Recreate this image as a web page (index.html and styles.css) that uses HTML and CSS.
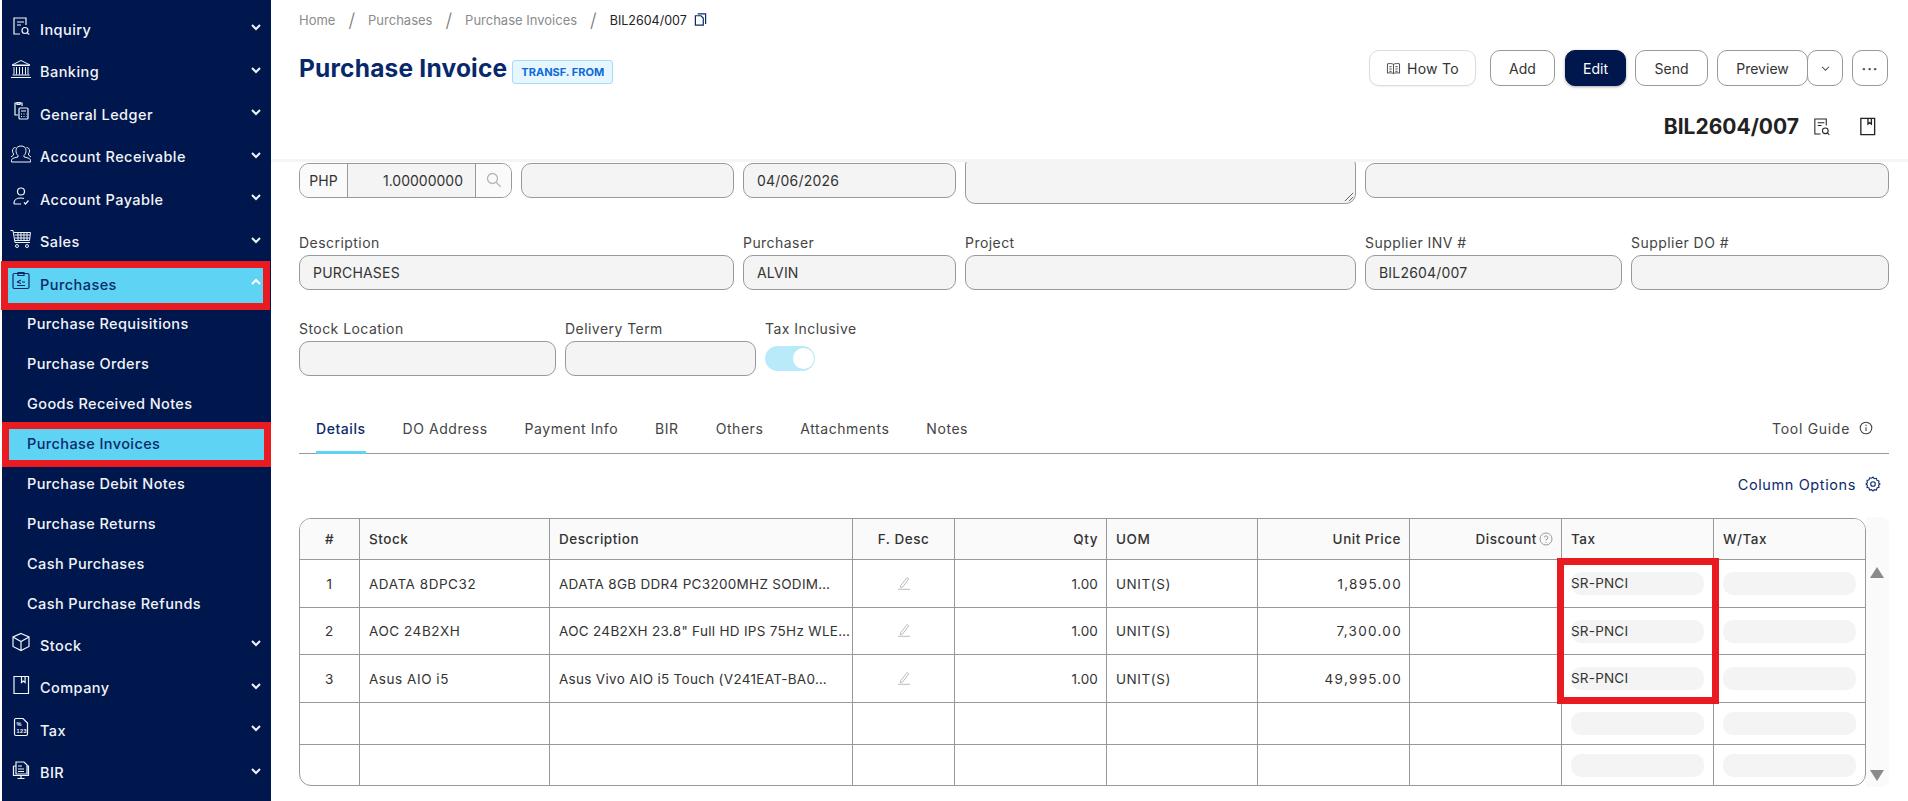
FILE: index.html
```html
<!DOCTYPE html>
<html lang="en">
<head>
<meta charset="utf-8">
<title>Purchase Invoice</title>
<link rel="stylesheet" href="styles.css">
</head>
<body>
<div class="app">
  <nav class="side">
    <a class="mi"><svg class="ic" viewBox="0 0 20 20"><path d="M15 9V2H3v16h6M6 6h7M6 9h4"/><circle cx="14" cy="14.500" r="3"/><path d="M16.200 16.700l2 2"/></svg><span>Inquiry</span><svg class="cv" viewBox="0 0 12 8"><path d="M2 2l4 4 4-4"/></svg></a>
    <a class="mi"><svg class="ic ic-w" viewBox="0 0 22 20"><path d="M2 6L11 1.500 20 6zM2.500 6.500h17M4 8v7.500M6.500 8v7.500M9.500 8v7.500M12.500 8v7.500M15.500 8v7.500M18 8v7.500M2.500 16h17M1 18.500h20"/></svg><span>Banking</span><svg class="cv" viewBox="0 0 12 8"><path d="M2 2l4 4 4-4"/></svg></a>
    <a class="mi"><svg class="ic" viewBox="0 0 20 20"><path d="M11 5V2H4v12h3M6 1.500h3v2H6z"/><rect x="8" y="7" width="9" height="11" rx="1"/><path d="M10 10h5M10 13h1M12.500 13h1M15 13h.5M10 15.500h1M12.500 15.500h1M15 15.500h.5"/></svg><span>General Ledger</span><svg class="cv" viewBox="0 0 12 8"><path d="M2 2l4 4 4-4"/></svg></a>
    <a class="mi"><svg class="ic ic-w" viewBox="0 0 22 20"><path d="M8 13c-2 .5-6.500 1-6.500 3.500V18h19v-1.500C20.500 14 16 13.500 14 13v-1.500c1.500-1.500 2-3 2-5C16 3.500 14 2 11 2S6 3.500 6 6.500c0 2 .5 3.500 2 5zM5.500 3.500C3.500 3.500 2.500 5 2.500 7c0 1 .5 2 1 3v1l-2.500 2M16.500 3.500c2 0 3 1.500 3 3.500 0 1-.5 2-1 3v1l2.500 2"/></svg><span>Account Receivable</span><svg class="cv" viewBox="0 0 12 8"><path d="M2 2l4 4 4-4"/></svg></a>
    <a class="mi"><svg class="ic" viewBox="0 0 20 20"><circle cx="10" cy="5.500" r="3.500"/><path d="M3 18v-1c0-3 3-5 7-5 1 0 2 .2 3 .5M3 18h7M13 16.500l1.500 1.500 3-3.500"/></svg><span>Account Payable</span><svg class="cv" viewBox="0 0 12 8"><path d="M2 2l4 4 4-4"/></svg></a>
    <a class="mi"><svg class="ic ic-w" viewBox="0 0 22 20"><path d="M.5 1.500H3l2 12h15M4 3.500h16.500l-1 8H5M8 3.500v8M11 3.500v8M14 3.500v8M17 3.500v8M4.500 6h15.500M4.800 9h15"/><circle cx="7" cy="17" r="1.500"/><circle cx="17" cy="17" r="1.500"/></svg><span>Sales</span><svg class="cv" viewBox="0 0 12 8"><path d="M2 2l4 4 4-4"/></svg></a>
    <a class="mi active"><svg class="ic" viewBox="0 0 20 20"><rect x="2" y="2.500" width="16" height="15" rx="1.500"/><path d="M7 1.500h6v3H7zM6 11l4-2M6 11l4 1.500M6 14.500h8M11 11h3"/></svg><span>Purchases</span><svg class="cv" viewBox="0 0 12 8"><path d="M2 6l4-4 4 4"/></svg></a>
    <div class="subs">
      <a class="si">Purchase Requisitions</a>
      <a class="si">Purchase Orders</a>
      <a class="si">Goods Received Notes</a>
      <a class="si active">Purchase Invoices</a>
      <a class="si">Purchase Debit Notes</a>
      <a class="si">Purchase Returns</a>
      <a class="si">Cash Purchases</a>
      <a class="si">Cash Purchase Refunds</a>
    </div>
    <a class="mi"><svg class="ic" viewBox="0 0 20 20"><path d="M10 1.500l8 3.500v9.500l-8 4-8-4V5zM2 5l8 4.500L18 5M10 9.500V18.500"/></svg><span>Stock</span><svg class="cv" viewBox="0 0 12 8"><path d="M2 2l4 4 4-4"/></svg></a>
    <a class="mi"><svg class="ic" viewBox="0 0 20 20"><path d="M3 1.500h14.500v17H3zM10.500 1.500v6l1.800-1.500 1.800 1.500v-6"/></svg><span>Company</span><svg class="cv" viewBox="0 0 12 8"><path d="M2 2l4 4 4-4"/></svg></a>
    <a class="mi"><svg class="ic" viewBox="0 0 20 20"><path d="M3.500 3a1.500 1.500 0 0 1 1.500-1.500h7l4.500 4.500V17a1.500 1.500 0 0 1-1.500 1.500H5A1.500 1.500 0 0 1 3.500 17z"/><text class="ic-t" x="5.500" y="8.500">%</text><text class="ic-t" x="5.500" y="16">123</text></svg><span>Tax</span><svg class="cv" viewBox="0 0 12 8"><path d="M2 2l4 4 4-4"/></svg></a>
    <a class="mi"><svg class="ic" viewBox="0 0 20 20"><path d="M5 2h8l3 3v9H5zM2.500 6H5M16 6h1.500v9.500h-15V6M7 6h4M7 9h6M7 11.500h6M10 15.500V18M6.500 18.500h7"/></svg><span>BIR</span><svg class="cv" viewBox="0 0 12 8"><path d="M2 2l4 4 4-4"/></svg></a>
  </nav>

  <main class="main">
    <header class="head">
      <div class="crumbs">
        <span>Home</span><i>/</i><span>Purchases</span><i>/</i><span>Purchase Invoices</span><i>/</i>
        <b>BIL2604/007</b>
        <svg class="copy" viewBox="0 0 14 16"><path d="M4 2.500h8.500v11M1.500 4.500h6l2.500 2.500v7.500H1.500z"/></svg>
      </div>
      <div class="titlebar">
        <div class="title"><h1>Purchase Invoice</h1><span class="badge">TRANSF. FROM</span></div>
        <div class="actions">
          <button class="btn howto"><svg viewBox="0 0 16 14"><path d="M8 2.500C6.500 1.500 3.500 1.500 1.500 2v10c2-.5 5-.5 6.500.5 1.500-1 4.500-1 6.500-.5V2c-2-.5-5-.5-6.500.5zM8 2.500v10M3.500 5h2.500M3.500 7.500h2.500M3.500 10h2.500M10 5h2.500M10 7.500h2.500M10 10h2.500"/></svg>How To</button>
          <button class="btn add">Add</button>
          <button class="btn edit">Edit</button>
          <button class="btn send">Send</button>
          <div class="split">
            <button class="btn preview">Preview</button>
            <button class="btn caret"><svg viewBox="0 0 12 8"><path d="M2 2l4 4 4-4"/></svg></button>
          </div>
          <button class="btn more">&#183;&#183;&#183;</button>
        </div>
      </div>
      <div class="docline">
        <strong>BIL2604/007</strong>
        <svg class="doc-ic" viewBox="0 0 20 20"><path d="M15 9V2H3v16h6M6 6h7M6 9h4"/><circle cx="14" cy="14.500" r="3"/><path d="M16.200 16.700l2 2"/></svg>
        <svg class="doc-ic" viewBox="0 0 20 20"><path d="M3 1.500h14.500v17H3zM10.500 1.500v6l1.800-1.500 1.800 1.500v-6"/></svg>
      </div>
    </header>

    <section class="body">
      <div class="row r1">
        <div class="group">
          <span class="g-code">PHP</span>
          <span class="g-rate">1.00000000</span>
          <span class="g-search"><svg viewBox="0 0 16 16"><circle cx="6.500" cy="6.500" r="5"/><path d="M10.200 10.200l4.500 4.500"/></svg></span>
        </div>
        <div class="input"></div>
        <div class="input">04/06/2026</div>
        <div class="input area"><svg class="grip" viewBox="0 0 12 12"><path d="M1 11L11 1M6 11l5-5"/></svg></div>
        <div class="input"></div>
      </div>
      <div class="row r2">
        <label class="field"><span>Description</span><div class="input">PURCHASES</div></label>
        <label class="field"><span>Purchaser</span><div class="input">ALVIN</div></label>
        <label class="field"><span>Project</span><div class="input"></div></label>
        <label class="field"><span>Supplier INV #</span><div class="input">BIL2604/007</div></label>
        <label class="field"><span>Supplier DO #</span><div class="input"></div></label>
      </div>
      <div class="row r3">
        <label class="field"><span>Stock Location</span><div class="input"></div></label>
        <label class="field"><span>Delivery Term</span><div class="input"></div></label>
        <label class="field"><span>Tax Inclusive</span><div class="toggle"><i></i></div></label>
      </div>

      <div class="tabs">
        <a class="tab on">Details</a>
        <a class="tab">DO Address</a>
        <a class="tab">Payment Info</a>
        <a class="tab">BIR</a>
        <a class="tab">Others</a>
        <a class="tab">Attachments</a>
        <a class="tab">Notes</a>
        <a class="guide">Tool Guide<svg viewBox="0 0 14 14"><circle cx="7" cy="7" r="5.800"/><path d="M7 6.300v3.800M7 3.800v1.200"/></svg></a>
      </div>

      <div class="colopts">Column Options<svg viewBox="0 0 16 16"><path d="M8 1l1.300 1.700 2.100-.4.6 2 2 .7-.4 2.100L15 8l-1.400 1.300.4 2-2 .7-.6 2-2.100-.4L8 15l-1.300-1.400-2.100.4-.6-2-2-.7.4-2L1 8l1.400-1.400-.4-2.100 2-.7.6-2 2.100.4z"/><circle cx="8" cy="8" r="2.300"/></svg></div>

      <div class="gridwrap">
        <div class="tablebox">
          <table class="grid">
            <colgroup>
              <col class="c-no"><col class="c-stock"><col class="c-desc"><col class="c-f"><col class="c-q"><col class="c-u"><col class="c-m"><col class="c-m"><col class="c-m"><col class="c-l">
            </colgroup>
            <thead>
              <tr><th class="ctr">#</th><th>Stock</th><th>Description</th><th class="ctr">F. Desc</th><th class="rt">Qty</th><th>UOM</th><th class="rt">Unit Price</th><th class="rt">Discount<svg class="help" viewBox="0 0 14 14"><circle cx="7" cy="7" r="6"/><path d="M5.200 5.500A1.800 1.800 0 1 1 7 7.500V8.500M7 10v1"/></svg></th><th>Tax</th><th>W/Tax</th></tr>
            </thead>
            <tbody>
              <tr class="h48">
                <td class="ctr">1</td><td>ADATA 8DPC32</td><td class="nw">ADATA 8GB DDR4 PC3200MHZ SODIM…</td>
                <td class="ctr"><svg class="pen" viewBox="0 0 14 14"><path d="M3.500 10L10 1.500l1.800 1.400-6.300 8.200-2.200.6zM1 13.300h12"/></svg></td>
                <td class="rt qty">1.00</td><td>UNIT(S)</td><td class="rt price">1,895.00</td><td></td>
                <td><div class="pill">SR-PNCI</div></td><td><div class="pill"></div></td>
              </tr>
              <tr class="h47">
                <td class="ctr">2</td><td>AOC 24B2XH</td><td class="nw">AOC 24B2XH 23.8" Full HD IPS 75Hz WLE…</td>
                <td class="ctr"><svg class="pen" viewBox="0 0 14 14"><path d="M3.500 10L10 1.500l1.800 1.400-6.300 8.200-2.200.6zM1 13.300h12"/></svg></td>
                <td class="rt qty">1.00</td><td>UNIT(S)</td><td class="rt price">7,300.00</td><td></td>
                <td><div class="pill">SR-PNCI</div></td><td><div class="pill"></div></td>
              </tr>
              <tr class="h48">
                <td class="ctr">3</td><td>Asus AIO i5</td><td class="nw">Asus Vivo AIO i5 Touch (V241EAT-BA0…</td>
                <td class="ctr"><svg class="pen" viewBox="0 0 14 14"><path d="M3.500 10L10 1.500l1.800 1.400-6.300 8.200-2.200.6zM1 13.300h12"/></svg></td>
                <td class="rt qty">1.00</td><td>UNIT(S)</td><td class="rt price">49,995.00</td><td></td>
                <td><div class="pill">SR-PNCI</div></td><td><div class="pill"></div></td>
              </tr>
              <tr class="h42"><td></td><td></td><td></td><td></td><td></td><td></td><td></td><td></td><td><div class="pill"></div></td><td><div class="pill"></div></td></tr>
              <tr class="h41"><td></td><td></td><td></td><td></td><td></td><td></td><td></td><td></td><td><div class="pill"></div></td><td><div class="pill"></div></td></tr>
            </tbody>
          </table>
          <div class="redbox"></div>
        </div>
        <div class="scrollbar">
          <span class="up"></span>
          <span class="down"></span>
        </div>
      </div>
    </section>
  </main>
</div>
</body>
</html>
```
FILE: styles.css
```css
*, *::before, *::after { box-sizing: border-box; }
html, body { margin: 0; height: 801px; overflow: hidden; background: #fff; }
body { font-family: Inter, "Noto Sans", sans-serif; font-size: 14px; color: #333; }
button { font: inherit; }

.app { display: flex; height: 801px; overflow: hidden; }

/* Sidebar */
.side { flex: 0 0 269px; width: 269px; margin-left: 2px; background: #00174d; padding-top: 8px; color: #f2f4f8; }
.mi { position: relative; display: flex; align-items: center; height: 42.5px; padding: 0 0 0 10px; font-weight: 450; font-size: 14.5px; letter-spacing: .45px; }
.mi span { position: relative; margin-left: 10px; flex: 1; }
.ic { position: relative; width: 20px; height: 20px; flex: none; fill: none; stroke: currentColor; stroke-width: 1.200; margin: -6px -1px 0; }
.ic-w { width: 22px; margin: -6px -2px 0; stroke-width: 1; }
.ic-t { font: 700 5.500px "Liberation Sans", sans-serif; fill: currentColor; stroke: none; }
.cv { position: relative; width: 12px; height: 8px; margin-right: 9px; margin-top: -4px; fill: none; stroke: currentColor; stroke-width: 2; flex: none; }
.mi.active { color: #0b2a6b; }
.mi.active::before { content: ""; position: absolute; left: -1px; top: -2px; width: 269px; height: 49px; border: 7px solid #e81c20; background: #5fd3f3; }
.mi.active .cv { stroke: #fff; }

.subs { margin-top: -1.500px; }
.si { position: relative; z-index: 0; display: block; height: 40px; line-height: 40px; padding-left: 25px; font-weight: 450; font-size: 14.5px; letter-spacing: .4px; }
.si.active { color: #0b2a6b; }
.si.active::before { content: ""; position: absolute; z-index: -1; left: 0; top: -2px; width: 269px; height: 45px; border: 7px solid #e81c20; background: #5fd3f3; }

/* Main */
.main { flex: 1; min-width: 0; display: flex; flex-direction: column; }
.head { height: 162px; flex: none; padding: 0 19px 0 28px; border-bottom: 3px solid #f5f5f5; }

.crumbs { height: 40px; display: flex; align-items: center; font-size: 13px; color: #8b8b8b; }
.crumbs i { font-style: normal; font-weight: 300; color: #777; margin: 0 13px; font-size: 19px; }
.crumbs b { font-weight: 400; color: #222; font-size: 12.500px; }
.copy { width: 13px; height: 16px; margin-left: 7px; fill: none; stroke: #0b2a6b; stroke-width: 1.300; margin-top: -3px; }

.titlebar { margin-top: 10px; height: 36px; display: flex; justify-content: space-between; align-items: center; }
.title { display: flex; align-items: center; }
.title h1 { margin: 0; font-size: 24.500px; font-weight: 700; color: #07296b; letter-spacing: .2px; }
.badge { margin: 7px 0 0 5px; height: 24px; line-height: 22px; padding: 0 8px; border: 1px solid #a6dcfb; border-radius: 3px; background: #e6f6ff; color: #0f6ad8; font-size: 11px; font-weight: 700; }

.actions { display: flex; align-items: center; margin-right: 1px; }
.btn { height: 36px; background: #fff; border: 1px solid #999; border-radius: 10px; color: #333; font-size: 14px; padding: 0; display: inline-flex; align-items: center; justify-content: center; }
.howto { width: 107px; border-color: #ddd; box-shadow: 0 1px 2px rgba(0,0,0,.06); letter-spacing: .3px; }
.howto svg { width: 15px; height: 13px; margin-right: 6px; fill: none; stroke: #444; stroke-width: 1; }
.add { width: 65px; margin-left: 14px; }
.edit { width: 61px; margin-left: 10px; background: #00174d; border-color: #00174d; color: #fff; box-shadow: 0 1px 3px rgba(0,0,0,.35); }
.send { width: 73px; margin-left: 9px; }
.split { display: flex; margin-left: 9px; }
.preview { width: 91px; }
.caret { width: 36px; margin-left: -1px; }
.caret svg { width: 11px; height: 7px; fill: none; stroke: #444; stroke-width: 1.200; }
.more { width: 36px; margin-left: 9px; letter-spacing: 1px; color: #555; font-weight: 700; }

.docline { margin-top: 25px; height: 30px; display: flex; justify-content: flex-end; align-items: center; padding-right: 12px; }
.docline strong { font-size: 21px; font-weight: 700; color: #222; margin-right: 13px; }
.doc-ic { width: 19px; height: 19px; fill: none; stroke: #222; stroke-width: 1.100; }
.doc-ic + .doc-ic { margin-left: 27px; stroke-width: 1.400; }

.body { flex: 1; min-height: 0; overflow: hidden; padding: 1px 19px 0 28px; }

/* Form */
.row { display: grid; column-gap: 9px; align-items: start; }
.r1 { grid-template-columns: 213px 213px 213px 391px 1fr; }
.r2 { grid-template-columns: 435px 213px 391px 257px 1fr; margin-top: 29px; }
.r3 { grid-template-columns: 257px 191px auto; margin-top: 29px; justify-content: start; }
.field { display: block; }
.field > span { display: block; height: 22px; line-height: 20px; color: #444; font-size: 14px; letter-spacing: .45px; }
.input { height: 35px; line-height: 33px; border: 1px solid #999; border-radius: 10px; background: #f4f4f4; padding: 0 13px; color: #333; font-size: 14px; letter-spacing: .2px; }
.area { position: relative; height: 49px; margin-top: -8px; }
.grip { position: absolute; right: 1px; bottom: 1px; width: 10px; height: 10px; fill: none; stroke: #444; stroke-width: 1; }
.group { display: flex; height: 35px; line-height: 33px; border: 1px solid #999; border-radius: 10px; overflow: hidden; background: #f4f4f4; }
.g-code { width: 48px; background: #fafafa; border-right: 1px solid #999; text-align: center; }
.g-rate { flex: 1; text-align: right; padding-right: 12px; }
.g-search { width: 36px; background: #fafafa; border-left: 1px solid #999; display: flex; align-items: center; justify-content: center; }
.g-search svg { width: 16px; height: 16px; fill: none; stroke: #b5b5b5; stroke-width: 1.300; margin-top: -2px; }
.toggle { position: relative; width: 50px; height: 25px; margin-top: 5px; border-radius: 13px; background: #b9eafa; }
.toggle i { position: absolute; right: 1px; top: 2px; width: 21px; height: 21px; border-radius: 50%; background: #fff; }

/* Tabs */
.tabs { display: flex; margin-top: 27px; height: 51px; padding-left: 17px; gap: 37px; border-bottom: 1px solid #999; align-items: stretch; }
.tab { position: relative; display: flex; align-items: center; color: #444; font-size: 14px; letter-spacing: .55px; }
.tab.on { color: #0b2a6b; font-weight: 500; }
.tab.on::after { content: ""; position: absolute; left: 0; right: 0; bottom: -1px; height: 3px; background: #5fd3f3; }
.guide { margin-left: auto; display: flex; align-items: center; gap: 9px; padding-right: 16px; color: #444; letter-spacing: .7px; }
.guide svg { width: 14px; height: 14px; fill: none; stroke: #444; stroke-width: 1.100; }

.colopts { margin-top: 20px; height: 20px; display: flex; justify-content: flex-end; align-items: center; gap: 9px; padding-right: 8px; color: #0b2a6b; font-size: 14.500px; letter-spacing: .6px; }
.colopts svg { width: 16px; height: 16px; fill: none; stroke: #0b2a6b; stroke-width: 1.100; }

/* Grid */
.gridwrap { display: flex; margin-top: 24px; align-items: stretch; }
.tablebox { position: relative; width: 1567px; height: 268px; border: 1px solid #999; border-radius: 12px; }
.grid { width: 1565px; table-layout: fixed; border-collapse: separate; border-spacing: 0; font-size: 13.500px; color: #333; }
.c-no { width: 60px; } .c-stock { width: 190px; } .c-desc { width: 303px; } .c-f { width: 102px; }
.c-q { width: 152px; } .c-u { width: 151px; } .c-m { width: 152px; } .c-l { width: 151px; }
.grid th { height: 41px; background: #fafafa; font-weight: 500; text-align: left; padding: 0 9px; color: #333; border-right: 1px solid #999; border-bottom: 1px solid #999; font-size: 13.500px; letter-spacing: .55px; }
.grid th:first-child { border-top-left-radius: 11px; }
.grid th:last-child { border-top-right-radius: 11px; border-right: 0; }
.grid td { padding: 0 9px; border-right: 1px solid #999; border-bottom: 1px solid #999; letter-spacing: .55px; }
.grid td:last-child { border-right: 0; }
.grid tr:last-child td { border-bottom: 0; }
.grid th.ctr, .grid td.ctr { text-align: center; }
.grid th.rt, .grid td.rt { text-align: right; padding-right: 8px; }
.grid td.qty { letter-spacing: .1px; }
.grid td.price { letter-spacing: 1.300px; padding-right: 7px; }
.grid td.nw { white-space: nowrap; letter-spacing: .3px; }
.h48 td { height: 48px; } .h47 td { height: 47px; } .h42 td { height: 42px; } .h41 td { height: 41px; }
.pill { height: 23px; line-height: 23px; border-radius: 10px; background: #f4f4f4; font-size: 13.500px; letter-spacing: .2px; }
.help { width: 14px; height: 14px; margin-left: 2px; vertical-align: -2px; fill: none; stroke: #999; stroke-width: 1; }
.pen { width: 14px; height: 14px; fill: none; stroke: #bbb; stroke-width: 1; vertical-align: -1px; }
.redbox { position: absolute; left: 1257px; top: 39px; width: 162px; height: 146px; border: 7px solid #e81c20; pointer-events: none; }

.scrollbar { position: relative; width: 23px; margin: -1px 0; background: #fafafa; border-radius: 0 8px 8px 0; }
.up, .down { position: absolute; left: 4px; width: 0; height: 0; border-left: 7px solid transparent; border-right: 7px solid transparent; }
.up { top: 50px; border-bottom: 11px solid #8a8a8a; }
.down { bottom: 6px; border-top: 11px solid #8a8a8a; }
```
